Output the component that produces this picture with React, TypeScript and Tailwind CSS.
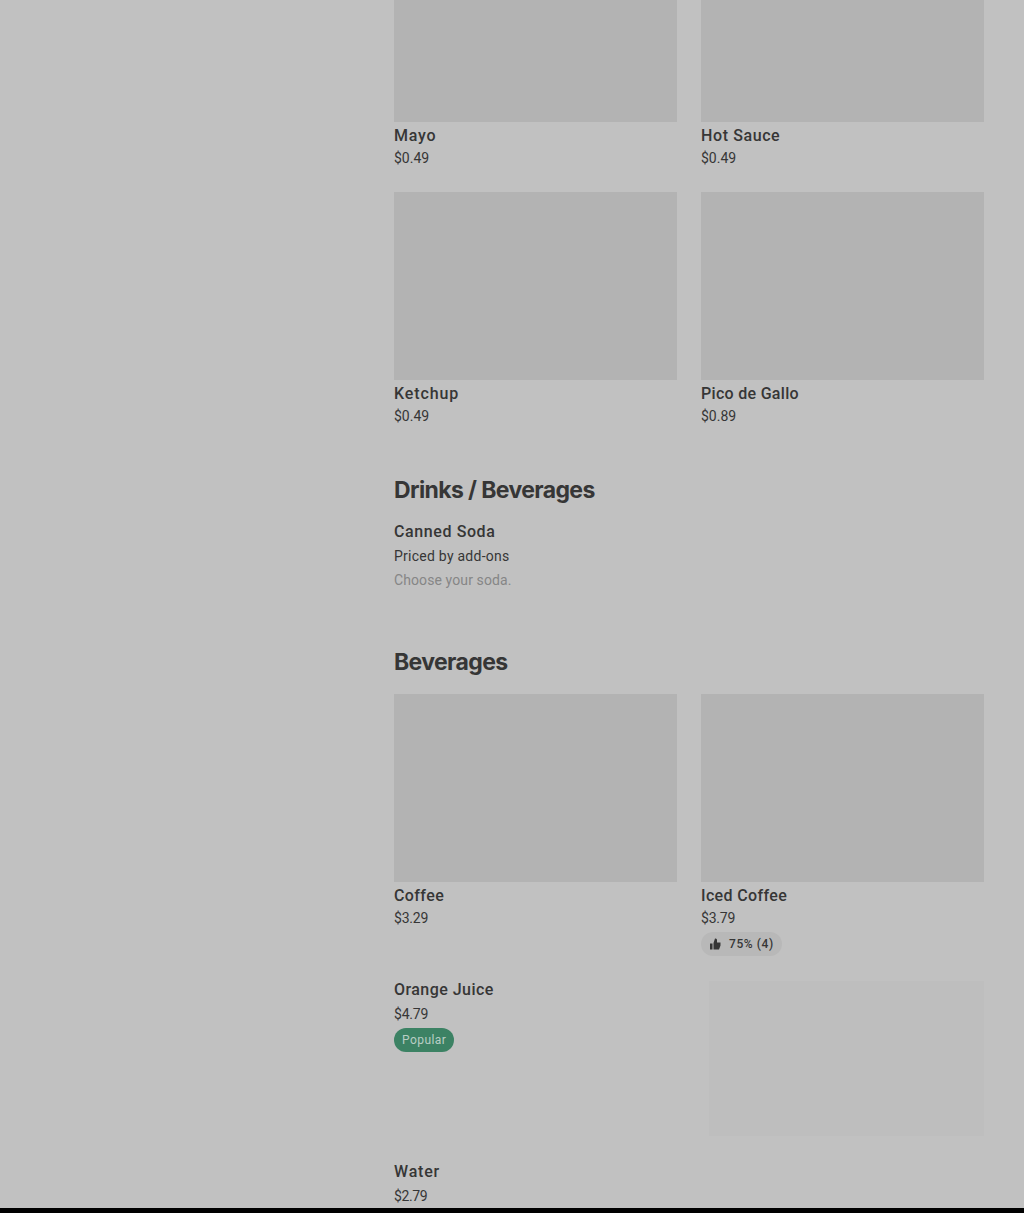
import React from 'react';

type Item = {
  name: string;
  price: string;
  nameClass: string;
  priceClass?: string;
  rating?: string;
};

const sauces: Item[] = [
  { name: 'Mayo', price: '$0.49', nameClass: 'tracking-[0.8px]' },
  { name: 'Hot Sauce', price: '$0.49', nameClass: 'tracking-[0.6px]' },
  { name: 'Ketchup', price: '$0.49', nameClass: 'tracking-[0.9px]' },
  { name: 'Pico de Gallo', price: '$0.89', nameClass: 'tracking-[0.3px]' },
];

const coffees: Item[] = [
  { name: 'Coffee', price: '$3.29', nameClass: 'tracking-[0.4px]', priceClass: 'tracking-[-0.2px]' },
  {
    name: 'Iced Coffee',
    price: '$3.79',
    nameClass: 'tracking-[0.35px]',
    priceClass: 'tracking-[-0.2px]',
    rating: '75% (4)',
  },
];

function ThumbIcon() {
  return (
    <svg className="w-3 h-3 shrink-0" viewBox="0 0 24 24" fill="currentColor">
      <path d="M2 11h5v12H2zM9 10l3-9h1c2 0 3 1.500 3 3.500V9h7v6l-3 8H9z" />
    </svg>
  );
}

function ItemName({ text, className }: { text: string; className: string }) {
  return <h3 className={`text-base leading-6 font-medium whitespace-nowrap ${className}`}>{text}</h3>;
}

function Price({ text, className = '' }: { text: string; className?: string }) {
  return <p className={`text-sm leading-5 whitespace-nowrap ${className}`}>{text}</p>;
}

function SectionTitle({ text }: { text: string }) {
  return (
    <h2 className="font-['Inter',sans-serif] text-[23px] leading-8 font-bold tracking-[-0.62px] whitespace-nowrap">
      {text}
    </h2>
  );
}

function Card({ item }: { item: Item }) {
  return (
    <div>
      <div className="h-[188px] bg-[#b3b3b3]" />
      <div className="pt-0.5">
        <ItemName text={item.name} className={item.nameClass} />
        <Price text={item.price} className={item.priceClass} />
      </div>
      {item.rating && (
        <div className="mt-1 h-6 w-[81px] rounded-full bg-[#b8b8b8] flex items-center gap-2 pl-2 text-xs font-medium whitespace-nowrap">
          <ThumbIcon />
          <span className="tracking-[0.6px]">{item.rating}</span>
        </div>
      )}
    </div>
  );
}

export default function App() {
  return (
    <div className="h-[1213px] overflow-hidden bg-[#c1c1c1] text-[#363636] font-['Roboto',sans-serif] flex flex-col">
      <main className="h-[1208px] shrink-0 overflow-hidden pl-[394px] pr-10">
        {/* Sauces */}
        <div className="-mt-[66px] grid grid-cols-2 gap-6">
          {sauces.map((item) => (
            <Card key={item.name} item={item} />
          ))}
        </div>

        {/* Drinks */}
        <section className="pt-12">
          <SectionTitle text="Drinks / Beverages" />
          <div className="pt-3.5">
            <ItemName text="Canned Soda" className="tracking-[0.6px]" />
            <p className="mt-0.5 text-sm leading-5 tracking-[0.25px] whitespace-nowrap">Priced by add-ons</p>
            <p className="mt-1 text-sm leading-5 tracking-[0.1px] text-[#868686] whitespace-nowrap">
              Choose your soda.
            </p>
          </div>
        </section>

        {/* Beverages */}
        <section className="pt-14">
          <SectionTitle text="Beverages" />
          <div className="pt-4 grid grid-cols-2 gap-6">
            {coffees.map((item) => (
              <Card key={item.name} item={item} />
            ))}
          </div>

          <div className="mt-[25px] flex justify-between">
            <div className="-mt-[3px]">
              <ItemName text="Orange Juice" className="tracking-[0.45px]" />
              <div className="pt-0.5">
                <Price text="$4.79" className="tracking-[-0.2px]" />
              </div>
              <div className="mt-1 h-6 w-[60px] rounded-full bg-[#3c8264] text-[#b9cec4] flex items-center pl-2 text-xs tracking-[0.45px] whitespace-nowrap">
                Popular
              </div>
            </div>
            <div className="w-[275px] h-[155px] bg-[#bebebe]" />
          </div>

          <div className="mt-6">
            <ItemName text="Water" className="tracking-[0.8px]" />
            <div className="pt-0.5">
              <Price text="$2.79" className="tracking-[-0.4px]" />
            </div>
          </div>
        </section>
      </main>
      <div className="h-[5px] shrink-0 bg-black" />
    </div>
  );
}
